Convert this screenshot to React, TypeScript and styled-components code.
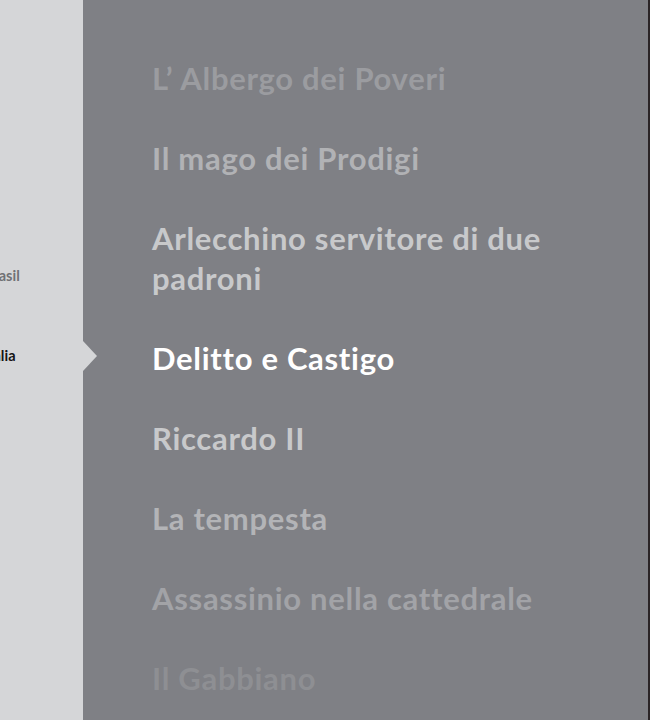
import React from 'react';
import styled, { createGlobalStyle } from 'styled-components';

const GlobalStyle = createGlobalStyle`
  html, body {
    margin: 0;
    padding: 0;
    background: #7f8085;
  }
`;

const countries = [
  { name: 'Brasil', active: false },
  { name: 'Italia', active: true },
];

const plays = [
  { title: 'L’ Albergo dei Poveri', color: '#9b9ca0' },
  { title: 'Il mago dei Prodigi', color: '#b1b2b5' },
  { title: 'Arlecchino servitore di due padroni', color: '#c8c9cb' },
  { title: 'Delitto e Castigo', color: '#ffffff' },
  { title: 'Riccardo II', color: '#c8c9cb' },
  { title: 'La tempesta', color: '#b3b4b7' },
  { title: 'Assassinio nella cattedrale', color: '#a2a3a7' },
  { title: 'Il Gabbiano', color: '#8e8f93' },
];

const App: React.FC = () => {
  return (
    <>
      <GlobalStyle />
      <Page>
        <Sidebar>
          <CountryList>
            {countries.map(c => (
              <Country key={c.name} $active={c.active}>
                {c.name}
              </Country>
            ))}
          </CountryList>
        </Sidebar>
        <Main>
          <PlayList>
            {plays.map(p => (
              <Play key={p.title} $color={p.color}>
                {p.title}
              </Play>
            ))}
          </PlayList>
        </Main>
        <EdgeStrip />
      </Page>
    </>
  );
};

const Page = styled.div`
  display: flex;
  width: 650px;
  height: 720px;
  overflow: hidden;
  font-family: Lato, 'Liberation Sans', sans-serif;
`;

const Sidebar = styled.aside`
  position: relative;
  z-index: 1;
  flex: 0 0 83px;
  background: #d5d6d8;
`;

// the country names run past the left edge, as in a scrolled carousel
const CountryList = styled.ul`
  list-style: none;
  margin: 0 0 0 -16px;
  padding: 256px 0 0;
  display: flex;
  flex-direction: column;
  gap: 40px;
`;

const Country = styled.li<{ $active: boolean }>`
  position: relative;
  font-size: 14.5px;
  font-weight: 700;
  line-height: 40px;
  white-space: nowrap;
  color: ${p => (p.$active ? '#141414' : '#707175')};

  &::after {
    content: '';
    display: ${p => (p.$active ? 'block' : 'none')};
    position: absolute;
    left: 100%;
    top: 50%;
    transform: translateY(-50%);
    width: 0;
    height: 0;
    border-left: 14px solid #d5d6d8;
    border-top: 15px solid transparent;
    border-bottom: 15px solid transparent;
  }
`;

const Main = styled.main`
  flex: 1;
  background: #7f8085;
  padding: 58px 0 0 69px;
`;

const PlayList = styled.ul`
  list-style: none;
  margin: 0;
  padding: 0;
  display: flex;
  flex-direction: column;
  gap: 40px;
`;

const Play = styled.li<{ $color: string }>`
  max-width: 430px;
  font-size: 31px;
  font-weight: 700;
  line-height: 40px;
  letter-spacing: 0.7px;
  color: ${p => p.$color};
`;

const EdgeStrip = styled.div`
  flex: 0 0 2px;
  background: #2a2426;
`;

export default App;
